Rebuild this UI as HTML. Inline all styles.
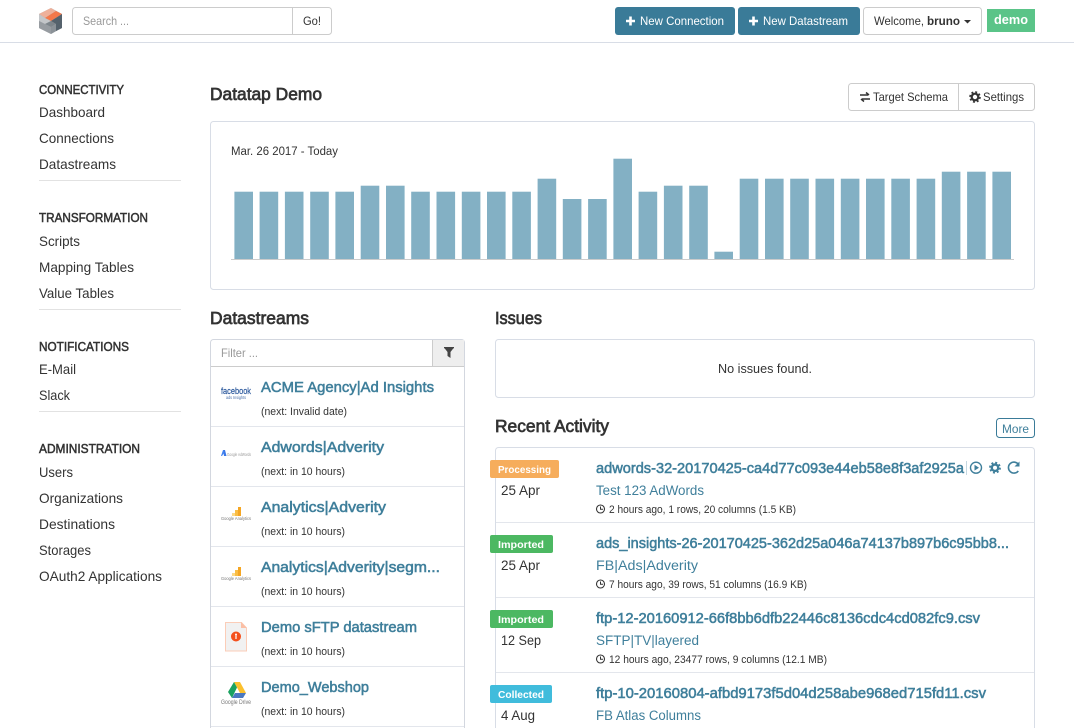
<!DOCTYPE html>
<html lang="en">
<head>
<meta charset="utf-8">
<title>Datatap Demo</title>
<style>
html,body{margin:0;padding:0;background:#fff;overflow:hidden}
svg{display:block}
text{font-family:"Liberation Sans",Arial,sans-serif;fill:#333;white-space:pre}
.side{font-size:14px}
.sh{font-size:12.5px;fill:#333;stroke:#333;stroke-width:.5px}
.h{font-size:17.5px;fill:#333;stroke:#333;stroke-width:.7px}
.t{font-size:15px;fill:#3f7f9b;stroke:#3f7f9b;stroke-width:.55px}
.n{font-size:11px}
.d{font-size:13.5px}
.s{font-size:13.5px;fill:#3f7f9b}
.m{font-size:10.8px}
.lb{font-size:10.5px;font-weight:700;fill:#fff}
.b{font-size:12px;fill:#fff}
.w{font-size:12px}
.tiny{fill:#777}
</style>
</head>
<body>
<svg width="1074" height="728" viewBox="0 0 1074 728" xmlns="http://www.w3.org/2000/svg">
<rect width="1074" height="728" fill="#fff"/>

<!-- header -->
<rect x="0" y="42" width="1074" height="1" fill="#d8dde6"/>
<polygon points="51,8 62,14 62,28 51,34 39,28 39,14" fill="#a9adb1"/>
<polygon points="51,8 39,14 45,18 56,11" fill="#eeb09a"/>
<polygon points="56,11 62,14 51,21 45,18" fill="#f4784a"/>
<polygon points="62,14 62,28 56,31 56,24 51,21" fill="#55626c"/>
<polygon points="39,14 45,18 51,21 45,24 39,21" fill="#c3c6c9"/>
<polygon points="51,21 56,24 51,27 45,24" fill="#7d858b"/>
<polygon points="39,21 45,24 51,27 51,34 39,28" fill="#979ca1"/>
<polygon points="51,27 56,24 56,31 51,34" fill="#8b9298"/>

<rect x="72.5" y="7.5" width="259" height="27" rx="3" fill="#fff" stroke="#ccc"/>
<rect x="292" y="8" width="1" height="26" fill="#ccc"/>
<text x="83" y="25" class="w" style="fill:#999" textLength="46" lengthAdjust="spacingAndGlyphs">Search ...</text>
<text x="303" y="25" class="w" textLength="18" lengthAdjust="spacingAndGlyphs">Go!</text>

<rect x="615" y="7" width="120" height="28" rx="3" fill="#3a7b98"/>
<path d="M630.5 16.5v9M626 21h9" stroke="#fff" stroke-width="2.6" fill="none"/>
<text x="640" y="25" class="b" textLength="84" lengthAdjust="spacingAndGlyphs">New Connection</text>
<rect x="738" y="7" width="122" height="28" rx="3" fill="#3a7b98"/>
<path d="M753.5 16.5v9M749 21h9" stroke="#fff" stroke-width="2.6" fill="none"/>
<text x="763" y="25" class="b" textLength="85" lengthAdjust="spacingAndGlyphs">New Datastream</text>

<rect x="863.5" y="7.5" width="118" height="27" rx="3" fill="#fff" stroke="#ccc"/>
<text x="874" y="25" class="w" textLength="50" lengthAdjust="spacingAndGlyphs">Welcome,</text>
<text x="927" y="25" class="w" style="font-weight:700" textLength="33" lengthAdjust="spacingAndGlyphs">bruno</text>
<polygon points="964,20 971,20 967.5,23.5" fill="#333"/>

<rect x="987" y="9" width="48" height="23" fill="#5ac488"/>
<text x="994" y="24" style="font-size:12.5px;font-weight:700;fill:#fff" textLength="34" lengthAdjust="spacingAndGlyphs">demo</text>

<!-- sidebar -->
<text x="39" y="94" class="sh" textLength="85" lengthAdjust="spacingAndGlyphs">CONNECTIVITY</text>
<text x="39" y="117" class="side" textLength="66" lengthAdjust="spacingAndGlyphs">Dashboard</text>
<text x="39" y="143" class="side" textLength="75" lengthAdjust="spacingAndGlyphs">Connections</text>
<text x="39" y="169" class="side" textLength="77" lengthAdjust="spacingAndGlyphs">Datastreams</text>
<rect x="39" y="180" width="142" height="1" fill="#e2e2e2"/>
<text x="39" y="222" class="sh" textLength="109" lengthAdjust="spacingAndGlyphs">TRANSFORMATION</text>
<text x="39" y="246" class="side" textLength="41" lengthAdjust="spacingAndGlyphs">Scripts</text>
<text x="39" y="272" class="side" textLength="95" lengthAdjust="spacingAndGlyphs">Mapping Tables</text>
<text x="39" y="298" class="side" textLength="75" lengthAdjust="spacingAndGlyphs">Value Tables</text>
<rect x="39" y="309" width="142" height="1" fill="#e2e2e2"/>
<text x="39" y="351" class="sh" textLength="90" lengthAdjust="spacingAndGlyphs">NOTIFICATIONS</text>
<text x="39" y="374" class="side" textLength="37" lengthAdjust="spacingAndGlyphs">E-Mail</text>
<text x="39" y="400" class="side" textLength="31" lengthAdjust="spacingAndGlyphs">Slack</text>
<rect x="39" y="411" width="142" height="1" fill="#e2e2e2"/>
<text x="39" y="453" class="sh" textLength="101" lengthAdjust="spacingAndGlyphs">ADMINISTRATION</text>
<text x="39" y="477" class="side" textLength="34" lengthAdjust="spacingAndGlyphs">Users</text>
<text x="39" y="503" class="side" textLength="84" lengthAdjust="spacingAndGlyphs">Organizations</text>
<text x="39" y="529" class="side" textLength="76" lengthAdjust="spacingAndGlyphs">Destinations</text>
<text x="39" y="555" class="side" textLength="52" lengthAdjust="spacingAndGlyphs">Storages</text>
<text x="39" y="581" class="side" textLength="123" lengthAdjust="spacingAndGlyphs">OAuth2 Applications</text>

<!-- title row -->
<text x="210" y="100" class="h" textLength="112" lengthAdjust="spacingAndGlyphs">Datatap Demo</text>
<rect x="848.5" y="83.5" width="186" height="27" rx="3" fill="#fff" stroke="#ccc"/>
<rect x="958" y="84" width="1" height="26" fill="#ccc"/>
<path d="M860 95h8M866 92.5l3 2.5M870 99h-8M864 101.5l-3-2.5" stroke="#333" stroke-width="1.5" fill="none"/>
<text x="873" y="101" class="w" textLength="75" lengthAdjust="spacingAndGlyphs">Target Schema</text>
<circle cx="975" cy="97" r="3.3" fill="none" stroke="#333" stroke-width="2.2"/>
<circle cx="975" cy="97" r="5" fill="none" stroke="#333" stroke-width="1.6" stroke-dasharray="2 1.93"/>
<text x="983" y="101" class="w" textLength="41" lengthAdjust="spacingAndGlyphs">Settings</text>

<!-- chart -->
<rect x="210.5" y="121.5" width="824" height="168" rx="3" fill="#fff" stroke="#d8dde6"/>
<text x="231" y="155" style="font-size:11.5px" textLength="107" lengthAdjust="spacingAndGlyphs">Mar. 26 2017 - Today</text>
<g fill="#83b0c4">
<rect x="234.4" y="191.7" width="18.6" height="67.6"/>
<rect x="259.6" y="191.7" width="18.6" height="67.6"/>
<rect x="284.9" y="191.7" width="18.6" height="67.6"/>
<rect x="310.2" y="191.7" width="18.6" height="67.6"/>
<rect x="335.4" y="191.7" width="18.6" height="67.6"/>
<rect x="360.7" y="185.7" width="18.6" height="73.6"/>
<rect x="386" y="185.7" width="18.6" height="73.6"/>
<rect x="411.2" y="191.7" width="18.6" height="67.6"/>
<rect x="436.5" y="191.7" width="18.6" height="67.6"/>
<rect x="461.8" y="191.7" width="18.6" height="67.6"/>
<rect x="487" y="191.7" width="18.6" height="67.6"/>
<rect x="512.3" y="191.7" width="18.6" height="67.6"/>
<rect x="537.6" y="178.7" width="18.6" height="80.6"/>
<rect x="562.8" y="199" width="18.6" height="60.3"/>
<rect x="588.1" y="199" width="18.6" height="60.3"/>
<rect x="613.4" y="158.7" width="18.6" height="100.6"/>
<rect x="638.6" y="191.7" width="18.6" height="67.6"/>
<rect x="663.9" y="185.7" width="18.6" height="73.6"/>
<rect x="689.2" y="185.7" width="18.6" height="73.6"/>
<rect x="714.4" y="251.7" width="18.6" height="7.6"/>
<rect x="739.7" y="178.7" width="18.6" height="80.6"/>
<rect x="765" y="178.7" width="18.6" height="80.6"/>
<rect x="790.2" y="178.7" width="18.6" height="80.6"/>
<rect x="815.5" y="178.7" width="18.6" height="80.6"/>
<rect x="840.8" y="178.7" width="18.6" height="80.6"/>
<rect x="866" y="178.7" width="18.6" height="80.6"/>
<rect x="891.3" y="178.7" width="18.6" height="80.6"/>
<rect x="916.6" y="178.7" width="18.6" height="80.6"/>
<rect x="941.8" y="171.7" width="18.6" height="87.6"/>
<rect x="967.1" y="171.7" width="18.6" height="87.6"/>
<rect x="992.4" y="171.7" width="18.6" height="87.6"/>
</g>
<rect x="231" y="259" width="783" height="1" fill="#ccc"/>

<!-- datastreams -->
<text x="210" y="324" class="h" textLength="99" lengthAdjust="spacingAndGlyphs">Datastreams</text>
<path d="M210.5 728V342.5a3 3 0 0 1 3-3h248a3 3 0 0 1 3 3V728" fill="#fff" stroke="#d3d7df"/>
<rect x="432" y="340" width="32" height="26" fill="#eee"/>
<rect x="432" y="340" width="1" height="27" fill="#ccc"/>
<rect x="211" y="366" width="253" height="1" fill="#ccc"/>
<polygon points="444,347.5 454,347.5 450.5,352 450.5,358 447.5,356 447.5,352" fill="#444"/>
<rect x="444" y="347" width="10" height="1.3" fill="#444"/>
<text x="221" y="357" style="font-size:12px;fill:#999" textLength="37" lengthAdjust="spacingAndGlyphs">Filter ...</text>
<g fill="#e3e6ec">
<rect x="211" y="426" width="253" height="1"/>
<rect x="211" y="486" width="253" height="1"/>
<rect x="211" y="546" width="253" height="1"/>
<rect x="211" y="606" width="253" height="1"/>
<rect x="211" y="666" width="253" height="1"/>
<rect x="211" y="726" width="253" height="1"/>
</g>

<text x="221" y="394" style="font-size:9px;fill:#2d5a9e;stroke:#2d5a9e;stroke-width:.2px" textLength="30" lengthAdjust="spacingAndGlyphs">facebook</text>
<text x="226" y="399" style="font-size:4.5px;fill:#4a6fa8" textLength="20" lengthAdjust="spacingAndGlyphs">ads Insights</text>
<text x="261" y="392" class="t" textLength="173" lengthAdjust="spacingAndGlyphs">ACME Agency|Ad Insights</text>
<text x="261" y="415" class="n" textLength="86" lengthAdjust="spacingAndGlyphs">(next: Invalid date)</text>

<polygon points="223,450 225,450 226.5,456 224,456" fill="#3b78e7"/>
<polygon points="223,450 224,453 222,456 221,456" fill="#4285f4"/>
<text x="227" y="456" style="font-size:4.5px;fill:#999" textLength="24" lengthAdjust="spacingAndGlyphs">Google AdWords</text>
<text x="261" y="452" class="t" textLength="123" lengthAdjust="spacingAndGlyphs">Adwords|Adverity</text>
<text x="261" y="475" class="n" textLength="84" lengthAdjust="spacingAndGlyphs">(next: in 10 hours)</text>

<rect x="232" y="513" width="3" height="3" fill="#fbd98a"/>
<rect x="235" y="510" width="3" height="6" fill="#f9bd45"/>
<rect x="238" y="507" width="3" height="9" fill="#f5a623"/>
<text x="221" y="520" class="tiny" style="font-size:4.8px" textLength="30" lengthAdjust="spacingAndGlyphs">Google Analytics</text>
<text x="261" y="512" class="t" textLength="125" lengthAdjust="spacingAndGlyphs">Analytics|Adverity</text>
<text x="261" y="535" class="n" textLength="84" lengthAdjust="spacingAndGlyphs">(next: in 10 hours)</text>

<rect x="232" y="573" width="3" height="3" fill="#fbd98a"/>
<rect x="235" y="570" width="3" height="6" fill="#f9bd45"/>
<rect x="238" y="567" width="3" height="9" fill="#f5a623"/>
<text x="221" y="580" class="tiny" style="font-size:4.8px" textLength="30" lengthAdjust="spacingAndGlyphs">Google Analytics</text>
<text x="261" y="572" class="t" textLength="179" lengthAdjust="spacingAndGlyphs">Analytics|Adverity|segm...</text>
<text x="261" y="595" class="n" textLength="84" lengthAdjust="spacingAndGlyphs">(next: in 10 hours)</text>

<path d="M225.5 622.5h16l5 5.5v23h-21z" fill="#f1f1f1" stroke="#fbcdb8"/>
<polygon points="241,622 247,628 241,628" fill="#fbbfa5"/>
<circle cx="236" cy="636.5" r="5" fill="#f4511e"/>
<rect x="235.4" y="635.5" width="1.2" height="3.5" fill="#fff"/>
<circle cx="236" cy="634.5" r="1" fill="#fff"/>
<text x="261" y="632" class="t" textLength="156" lengthAdjust="spacingAndGlyphs">Demo sFTP datastream</text>
<text x="261" y="655" class="n" textLength="84" lengthAdjust="spacingAndGlyphs">(next: in 10 hours)</text>

<polygon points="234,682 240,682 246,693 240,693" fill="#fbc02d"/>
<polygon points="234,682 237,687.5 232,698 228,692" fill="#1aa260"/>
<polygon points="232,698 235,693 246,693 243,698" fill="#4b78c0"/>
<text x="221" y="704" class="tiny" style="font-size:6px" textLength="30" lengthAdjust="spacingAndGlyphs">Google Drive</text>
<text x="261" y="692" class="t" textLength="108" lengthAdjust="spacingAndGlyphs">Demo_Webshop</text>
<text x="261" y="715" class="n" textLength="84" lengthAdjust="spacingAndGlyphs">(next: in 10 hours)</text>

<!-- issues -->
<text x="495" y="324" class="h" textLength="47" lengthAdjust="spacingAndGlyphs">Issues</text>
<rect x="495.5" y="339.5" width="539" height="58" rx="3" fill="#fff" stroke="#d8dde6"/>
<text x="718" y="373" style="font-size:12.5px" textLength="94" lengthAdjust="spacingAndGlyphs">No issues found.</text>

<!-- recent activity -->
<text x="495" y="432" class="h" textLength="114" lengthAdjust="spacingAndGlyphs">Recent Activity</text>
<rect x="996.5" y="418.5" width="38" height="19" rx="3" fill="#fff" stroke="#3a7b98"/>
<text x="1002" y="433" style="font-size:11.5px;fill:#3f7f9b" textLength="27" lengthAdjust="spacingAndGlyphs">More</text>
<path d="M495.5 728V450.5a3 3 0 0 1 3-3h533a3 3 0 0 1 3 3V728" fill="#fff" stroke="#d8dde6"/>
<g fill="#e3e6ec">
<rect x="496" y="522" width="538" height="1"/>
<rect x="496" y="597" width="538" height="1"/>
<rect x="496" y="672" width="538" height="1"/>
</g>

<rect x="490" y="460" width="69" height="18" rx="2" fill="#f6ad5c"/>
<text x="498" y="473" class="lb" textLength="53" lengthAdjust="spacingAndGlyphs">Processing</text>
<text x="501" y="495" class="d" textLength="39" lengthAdjust="spacingAndGlyphs">25 Apr</text>
<text x="596" y="473" class="t" textLength="368" lengthAdjust="spacingAndGlyphs">adwords-32-20170425-ca4d77c093e44eb58e8f3af2925a</text>
<rect x="966" y="461" width="1" height="14" fill="#c5d8e1"/>
<circle cx="976" cy="467.7" r="5.5" fill="none" stroke="#3f7f9b" stroke-width="1.4"/>
<polygon points="974.5,464.8 979,467.7 974.5,470.6" fill="#3f7f9b"/>
<circle cx="995" cy="467.7" r="3.2" fill="none" stroke="#3f7f9b" stroke-width="2.4"/>
<circle cx="995" cy="467.7" r="5" fill="none" stroke="#3f7f9b" stroke-width="1.8" stroke-dasharray="2 1.93"/>
<path d="M1018.3 471a5.5 5.5 0 1 1 .2-6.5" fill="none" stroke="#3f7f9b" stroke-width="1.6"/>
<polygon points="1019.5,461.5 1019.5,466.5 1014.5,466.5" fill="#3f7f9b"/>
<text x="596" y="495" class="s" textLength="108" lengthAdjust="spacingAndGlyphs">Test 123 AdWords</text>
<circle cx="600.5" cy="509" r="4" fill="none" stroke="#333" stroke-width="1.1"/>
<path d="M600.5 506.5V509.3H603" fill="none" stroke="#333"/>
<text x="609" y="513" class="m" textLength="187" lengthAdjust="spacingAndGlyphs">2 hours ago, 1 rows, 20 columns (1.5 KB)</text>

<rect x="490" y="535" width="63" height="18" rx="2" fill="#4cb862"/>
<text x="498" y="548" class="lb" textLength="46" lengthAdjust="spacingAndGlyphs">Imported</text>
<text x="501" y="570" class="d" textLength="39" lengthAdjust="spacingAndGlyphs">25 Apr</text>
<text x="596" y="548" class="t" textLength="413" lengthAdjust="spacingAndGlyphs">ads_insights-26-20170425-362d25a046a74137b897b6c95bb8...</text>
<text x="596" y="570" class="s" textLength="102" lengthAdjust="spacingAndGlyphs">FB|Ads|Adverity</text>
<circle cx="600.5" cy="584" r="4" fill="none" stroke="#333" stroke-width="1.1"/>
<path d="M600.5 581.5V584.3H603" fill="none" stroke="#333"/>
<text x="609" y="588" class="m" textLength="198" lengthAdjust="spacingAndGlyphs">7 hours ago, 39 rows, 51 columns (16.9 KB)</text>

<rect x="490" y="610" width="63" height="18" rx="2" fill="#4cb862"/>
<text x="498" y="623" class="lb" textLength="46" lengthAdjust="spacingAndGlyphs">Imported</text>
<text x="501" y="645" class="d" textLength="40" lengthAdjust="spacingAndGlyphs">12 Sep</text>
<text x="596" y="623" class="t" textLength="384" lengthAdjust="spacingAndGlyphs">ftp-12-20160912-66f8bb6dfb22446c8136cdc4cd082fc9.csv</text>
<text x="596" y="645" class="s" textLength="103" lengthAdjust="spacingAndGlyphs">SFTP|TV|layered</text>
<circle cx="600.5" cy="659" r="4" fill="none" stroke="#333" stroke-width="1.1"/>
<path d="M600.5 656.5V659.3H603" fill="none" stroke="#333"/>
<text x="609" y="663" class="m" textLength="218" lengthAdjust="spacingAndGlyphs">12 hours ago, 23477 rows, 9 columns (12.1 MB)</text>

<rect x="490" y="685" width="62" height="18" rx="2" fill="#40bcdc"/>
<text x="498" y="698" class="lb" textLength="46" lengthAdjust="spacingAndGlyphs">Collected</text>
<text x="501" y="720" class="d" textLength="34" lengthAdjust="spacingAndGlyphs">4 Aug</text>
<text x="596" y="698" class="t" textLength="390" lengthAdjust="spacingAndGlyphs">ftp-10-20160804-afbd9173f5d04d258abe968ed715fd11.csv</text>
<text x="596" y="720" class="s" textLength="105" lengthAdjust="spacingAndGlyphs">FB Atlas Columns</text>
</svg>
</body>
</html>
